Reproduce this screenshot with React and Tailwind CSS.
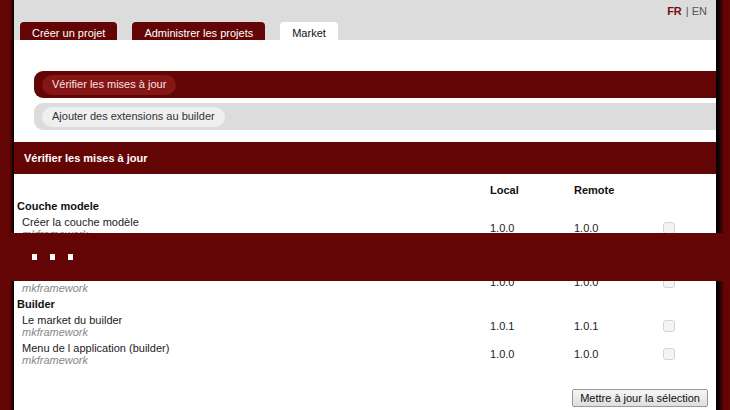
const red = 'bg-[#640505]';

function Tab({ label, active }) {
  return (
    <div
      className={
        'h-[18px] px-[12px] pt-[5px] leading-[13px] rounded-t-[4px] ' +
        (active ? 'bg-white text-[#111]' : 'bg-[#640505] text-white')
      }
    >
      {label}
    </div>
  );
}

function Checkbox() {
  return <div className="w-[12px] h-[12px] rounded-[3px] border border-[#d4d4d4] bg-[#f4f4f4]" />;
}

function Heading({ label }) {
  return (
    <div className="h-[16px] leading-[16px] pl-[3px] font-bold text-[#111]">{label}</div>
  );
}

function Row({ name, local, remote, short }) {
  return (
    <div className={'grid grid-cols-[474px_84px_84px_1fr] items-center ' + (short ? 'h-[26px]' : 'h-[28px]')}>
      <div className="pl-[8px]">
        <div className="leading-[12px] text-[#222]">{name}</div>
        <div className="leading-[12px] italic text-[#888]">mkframework</div>
      </div>
      <div className="pl-[2px] text-[#222]">{local}</div>
      <div className="pl-[2px] text-[#222]">{remote}</div>
      <div className="pl-[7px]">
        <Checkbox />
      </div>
    </div>
  );
}

function MenuBar({ label, dark }) {
  return (
    <div
      className={
        'h-[27px] ml-[20px] rounded-l-[9px] flex items-center pl-[8px] ' +
        (dark ? 'bg-[#640505]' : 'bg-[#dcdcdc]')
      }
    >
      <div
        className={
          'h-[20px] px-[10px] rounded-full flex items-center ' +
          (dark ? 'bg-[#851616] text-[#f6e4e4]' : 'bg-[#efefef] text-[#333]')
        }
      >
        {label}
      </div>
    </div>
  );
}

export default function App() {
  return (
    <div className="relative w-[730px] h-[410px] overflow-hidden flex font-['Liberation_Sans',Arial,sans-serif] text-[11px]">
      <div className="w-[14px] bg-[linear-gradient(to_right,#640505_70%,#000)]" />

      <div className="w-[702px] bg-white flex flex-col">
        <div className="h-[40px] bg-[#dcdcdc] flex flex-col">
          <div className="flex justify-end pr-[9px] pt-[4px] h-[22px] leading-[14px]">
            <span className="font-bold text-[#7a0a0a]">FR</span>
            <span className="text-[#555] ml-[4px]">| EN</span>
          </div>
          <div className="flex gap-[15px] pl-[6px]">
            <Tab label="Créer un projet" />
            <Tab label="Administrer les projets" />
            <Tab label="Market" active />
          </div>
        </div>

        <div className="pt-[31px] flex flex-col gap-[5px]">
          <MenuBar label="Vérifier les mises à jour" dark />
          <MenuBar label="Ajouter des extensions au builder" />
        </div>

        <div className={'mt-[12px] h-[32px] flex items-center pl-[10px] font-bold text-white ' + red}>
          Vérifier les mises à jour
        </div>

        <div className="pt-[8px]">
          <div className="grid grid-cols-[474px_84px_84px_1fr] h-[16px] leading-[16px] font-bold text-[#111]">
            <div />
            <div className="pl-[2px]">Local</div>
            <div className="pl-[2px]">Remote</div>
            <div />
          </div>
          <Heading label="Couche modele" />
          <Row name="Créer la couche modèle" local="1.0.0" remote="1.0.0" />
          <Row name="Créer la couche modèle" local="1.0.0" remote="1.0.0" short />
          <Row name="Créer la couche modèle" local="1.0.0" remote="1.0.0" />
          <Heading label="Builder" />
          <Row name="Le market du builder" local="1.0.1" remote="1.0.1" />
          <Row name="Menu de l application (builder)" local="1.0.0" remote="1.0.0" />
        </div>

        <div className="flex justify-end pr-[8px] pt-[21px]">
          <button className="h-[18px] px-[7px] border border-[#9a9a9a] rounded-[2px] bg-[linear-gradient(#f6f6f6,#dedede)] text-[#111] leading-[14px]">
            Mettre à jour la sélection
          </button>
        </div>
      </div>

      <div className="w-[14px] bg-[linear-gradient(to_right,#000_10%,#640505_60%)]" />

      <div className="absolute left-0 top-[233px] w-full h-[48px] bg-[#640505] flex items-center gap-[13px] pl-[32px]">
        <div className="w-[5px] h-[6px] bg-white" />
        <div className="w-[5px] h-[6px] bg-white" />
        <div className="w-[5px] h-[6px] bg-white" />
      </div>
    </div>
  );
}
